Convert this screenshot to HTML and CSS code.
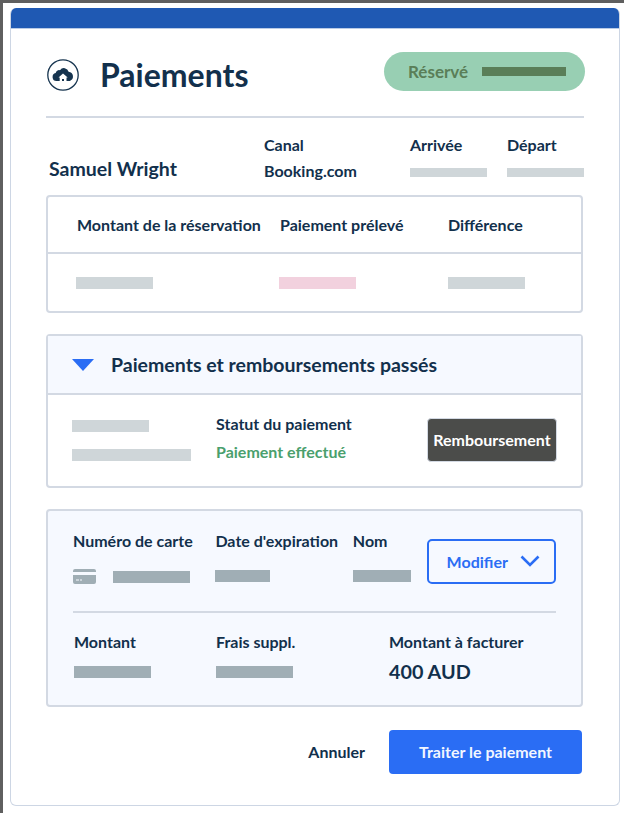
FILE: index.html
```html
<!DOCTYPE html>
<html lang="fr">
<head>
<meta charset="utf-8">
<title>Paiements</title>
<link rel="stylesheet" href="styles.css">
</head>
<body>
<main class="card">
  <div class="topbar"></div>
  <div class="content">
    <header class="head">
      <svg class="logo" viewBox="0 0 32 32" width="32" height="32" aria-hidden="true">
        <circle cx="16" cy="16" r="15.2" fill="none" stroke="#16344f" stroke-width="1.3"/>
        <path d="M9.500 22a4 4 0 0 1-.8-7.900 3.400 3.400 0 0 1 4.300-2.900 4.800 4.800 0 0 1 8.600 1.500 4.800 4.800 0 0 1 1.200 9.300h-3.300v-3.400h1.200L16 14.600l-4.500 4h1.200V22z" fill="#16344f"/>
        <rect x="15" y="20" width="2" height="2" fill="#16344f"/>
      </svg>
      <h1 class="title">Paiements</h1>
      <div class="pill"><span>Réservé</span><i class="pill-bar"></i></div>
    </header>
    <section class="info">
      <div class="guest">Samuel Wright</div>
      <div class="info-col canal"><span>Canal</span><span>Booking.com</span></div>
      <div class="info-col arrive"><span>Arrivée</span><i class="ph ph-light w77 h9"></i></div>
      <div class="info-col depart"><span>Départ</span><i class="ph ph-light w77 h9"></i></div>
    </section>
    <section class="box amounts">
      <div class="amounts-row amounts-head">
        <span>Montant de la réservation</span><span>Paiement prélevé</span><span>Différence</span>
      </div>
      <div class="amounts-row amounts-body">
        <i class="ph ph-light w77 h12"></i><i class="ph ph-pink w77 h12"></i><i class="ph ph-light w77 h12"></i>
      </div>
    </section>
    <section class="box past">
      <div class="past-head">
        <svg class="caret" viewBox="0 0 22 12" width="22" height="12" aria-hidden="true"><path d="M0 0h22L11 12z" fill="#2a6df4"/></svg>
        <h2>Paiements et remboursements passés</h2>
      </div>
      <div class="past-body">
        <div class="past-left"><i class="ph ph-light w77 h12"></i><i class="ph ph-light w119 h12"></i></div>
        <div class="past-status"><span>Statut du paiement</span><span class="ok">Paiement effectué</span></div>
        <button class="refund" type="button">Remboursement</button>
      </div>
    </section>
    <section class="box pay">
      <div class="pay-top">
        <div class="field f-card">
          <span>Numéro de carte</span>
          <div class="card-line">
            <svg viewBox="0 0 23 15" width="23" height="15" aria-hidden="true"><path d="M2 0h19a2 2 0 0 1 2 2v1H0V2a2 2 0 0 1 2-2zM0 6h23v7a2 2 0 0 1-2 2H2a2 2 0 0 1-2-2z" fill="#a0aeb5"/><path d="M3 11h3M7 11h2" stroke="#f6f9ff" stroke-width="1"/></svg>
            <i class="ph ph-dark w77 h12"></i>
          </div>
        </div>
        <div class="field f-date"><span>Date d'expiration</span><i class="ph ph-dark w55 h12"></i></div>
        <div class="field f-name"><span>Nom</span><i class="ph ph-dark w58 h12"></i></div>
        <button class="edit" type="button">Modifier
          <svg viewBox="0 0 20 12" width="20" height="12" aria-hidden="true"><path d="M1.500 1.500 10 10l8.500-8.500" fill="none" stroke="#2a6df4" stroke-width="2.600"/></svg>
        </button>
      </div>
      <div class="pay-bottom">
        <div class="field f-amount"><span>Montant</span><i class="ph ph-dark w77 h12"></i></div>
        <div class="field f-fee"><span>Frais suppl.</span><i class="ph ph-dark w77 h12"></i></div>
        <div class="field f-total"><span>Montant à facturer</span><strong>400 AUD</strong></div>
      </div>
    </section>
    <footer class="actions">
      <button class="cancel" type="button">Annuler</button>
      <button class="submit" type="button">Traiter le paiement</button>
    </footer>
  </div>
</main>
</body>
</html>
```
FILE: styles.css
```css
* { box-sizing: border-box; }
html, body { margin: 0; height: 100%; }
body {
  width: 624px;
  height: 813px;
  overflow: hidden;
  background: #fff;
  border-top: 3px solid #5f5f5f;
  border-left: 3px solid #5f5f5f;
  padding: 5px 4px 7px 7px;
  font-family: Lato, "Liberation Sans", sans-serif;
  color: #12304c;
  font-weight: 500;
}
.card {
  height: 798px;
  border: 1px solid #cdd6e4;
  border-top: 0;
  border-radius: 6px;
  background: #fff;
  overflow: hidden;
}
.topbar { height: 21px; background: #1f59b3; border-bottom: 1px solid #b9cbe6; }
.content { padding: 0 35px 0 35px; }
.head {
  display: flex;
  align-items: center;
  height: 89px;
  border-bottom: 2px solid #d3d9e3;
  padding-top: 5px;
}
.logo { margin-left: 1px; flex: none; }
.title { margin: 0 0 0 21px; font-size: 32px; font-weight: 700; line-height: 1; flex: 1; }
.pill {
  width: 201px;
  height: 39px;
  margin: -8px -1px 0 0;
  border-radius: 20px;
  background: #98cfb3;
  display: flex;
  align-items: center;
  gap: 14px;
  padding-left: 24px;
  color: #5a7e58;
  font-size: 17px;
  font-weight: 700;
}
.pill-bar { width: 84px; height: 9px; background: #5a7e58; }
.info {
  display: flex;
  height: 77px;
  font-size: 16px;
  font-weight: 700;
}
.guest { width: 215px; margin-left: 3px; padding-top: 39px; font-size: 19.500px; font-weight: 700; line-height: 24px; }
.info-col { display: flex; flex-direction: column; gap: 8px; padding-top: 18px; align-items: flex-start; }
.info-col span { line-height: 18px; }
.canal { width: 146px; }
.arrive { width: 97px; }
.depart { width: 77px; }
.arrive .ph, .depart .ph { margin-top: 6px; }
.ph { display: block; flex: none; }
.ph-light { background: #cfd6d9; }
.ph-pink { background: #f2d1de; }
.ph-dark { background: #a0aeb5; }
.w55 { width: 55px; }
.w58 { width: 58px; }
.w77 { width: 77px; }
.w119 { width: 119px; }
.h9 { height: 9px; }
.h12 { height: 12px; }
.box {
  width: 537px;
  border: 2px solid #d3d9e3;
  border-radius: 4px;
  font-size: 16px;
  font-weight: 700;
}
.amounts { height: 118px; }
.amounts-row { display: grid; grid-template-columns: 203px 168px 1fr; padding-left: 29px; align-items: center; }
.amounts-head { height: 57px; border-bottom: 2px solid #d3d9e3; }
.amounts-body { height: 57px; padding-left: 28px; grid-template-columns: 203px 169px 1fr; }
.past { margin-top: 21px; height: 154px; }
.past-head {
  height: 59px;
  background: #f6f9ff;
  border-bottom: 2px solid #d3d9e3;
  display: flex;
  align-items: center;
  gap: 17px;
  padding-left: 24px;
}
.past-head h2 { margin: 0; font-size: 19.500px; font-weight: 700; }
.past-body { display: flex; align-items: center; height: 91px; padding-left: 24px; }
.past-left { width: 144px; display: flex; flex-direction: column; gap: 17px; margin-top: -1px; }
.past-status { width: 211px; display: flex; flex-direction: column; gap: 9px; margin-top: -6px; }
.past-status span { line-height: 19px; }
.ok { color: #4aa06d; }
.refund {
  width: 130px;
  height: 44px;
  margin: -2px 0 0 0;
  border: 1px solid #d3d9e3;
  border-radius: 4px;
  background: #4b4c4a;
  color: #fff;
  font: 700 16px Lato, "Liberation Sans", sans-serif;
  padding: 0 0 1px;
}
.pay {
  margin-top: 21px;
  height: 198px;
  background: #f6f9ff;
  padding: 0 25px;
}
.field { display: flex; flex-direction: column; align-items: flex-start; }
.field span { line-height: 18px; }
.pay-top {
  height: 102px;
  border-bottom: 2px solid #d3d9e3;
  display: flex;
  padding-top: 21px;
}
.pay-top .field { gap: 20px; }
.f-card { width: 143px; }
.card-line { display: flex; align-items: center; gap: 17px; }
.card-line svg { margin-top: -1px; }
.f-date { width: 138px; }
.f-name { width: 74px; }
.edit {
  width: 130px;
  height: 45px;
  margin: 7px 0 0 0;
  border: 2px solid #2a6df4;
  border-radius: 5px;
  background: #f6f9ff;
  color: #2a6df4;
  font: 700 16px Lato, "Liberation Sans", sans-serif;
  display: flex;
  align-items: center;
  justify-content: center;
  gap: 12px;
  padding: 0 0 1px 4px;
}
.pay-bottom { display: flex; padding-top: 20px; }
.pay-bottom .field { gap: 15px; }
.f-amount { width: 143px; padding-left: 1px; }
.f-fee { width: 173px; }
.f-total strong { font-size: 19.800px; line-height: 24px; font-weight: 700; margin-top: -7px; }
.actions { display: flex; justify-content: flex-end; align-items: center; gap: 24px; width: 536px; margin-top: 23px; }
.cancel {
  border: 0;
  background: none;
  color: #12304c;
  font: 700 16px Lato, "Liberation Sans", sans-serif;
  padding: 0 0 1px;
}
.submit {
  width: 193px;
  height: 44px;
  border: 0;
  border-radius: 4px;
  background: #2a6df4;
  color: #f2f6ff;
  font: 700 16px Lato, "Liberation Sans", sans-serif;
  padding: 0 0 1px;
}
```
